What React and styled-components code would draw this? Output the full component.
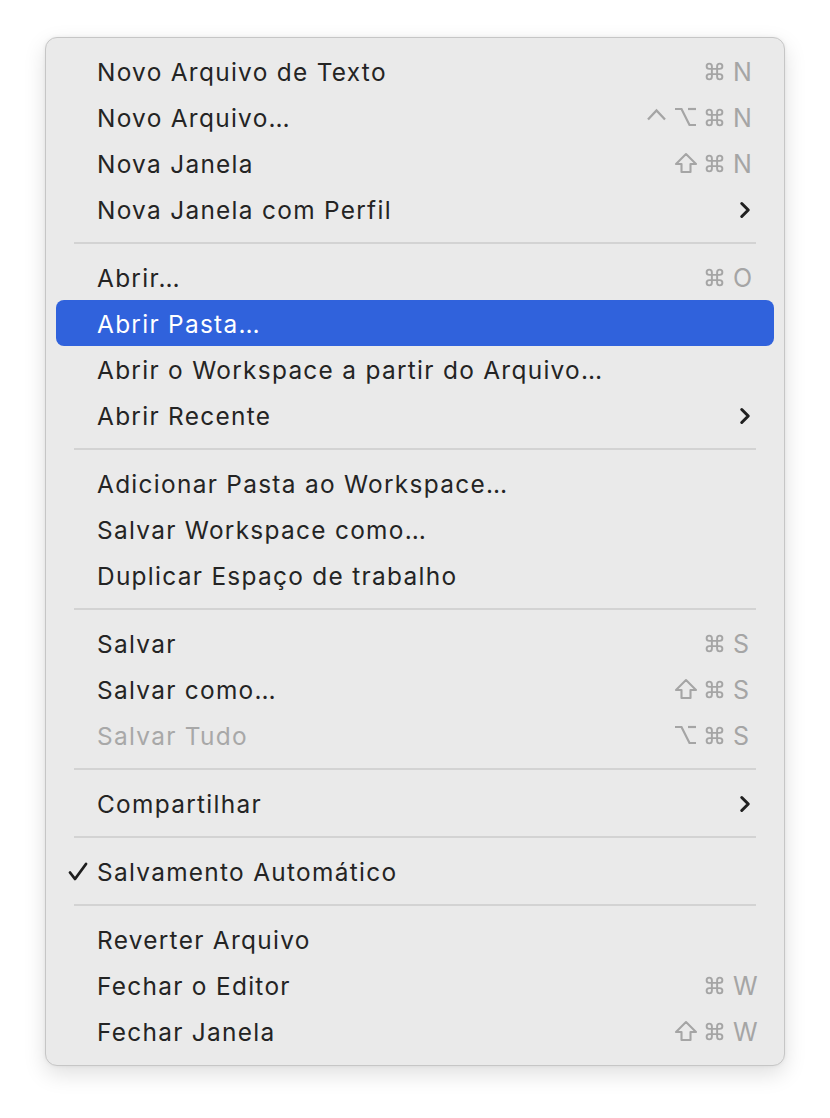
import React from "react";
import styled, { createGlobalStyle } from "styled-components";
import { ChevronRight } from "lucide-react";

const GlobalStyle = createGlobalStyle`
  html, body {
    margin: 0;
    padding: 0;
    background: #ffffff;
  }
  body {
    font-family: Inter, "Noto Sans", "Liberation Sans", sans-serif;
    -webkit-font-smoothing: antialiased;
  }
`;

const Page = styled.div`
  width: 830px;
  height: 1118px;
  padding: 37px 0 0 45px;
  box-sizing: border-box;
`;

const Menu = styled.div`
  width: 740px;
  box-sizing: border-box;
  padding: 10px 10px 11px;
  background: #eaeaea;
  border: 1px solid #c6c6c6;
  border-radius: 12px;
  box-shadow: 0 8px 22px rgba(0, 0, 0, 0.13), 0 0 4px rgba(0, 0, 0, 0.06);
`;

const Row = styled.div`
  height: 46px;
  display: flex;
  align-items: center;
  padding: 0 14px 0 0;
  border-radius: 8px;
  background: ${(p) => (p.$active ? "#3062dc" : "transparent")};
  color: ${(p) =>
    p.$active ? "#ffffff" : p.$disabled ? "#a8a8a8" : "#242424"};
`;

const CheckCell = styled.div`
  width: 41px;
  display: flex;
  justify-content: flex-end;
  padding-right: 9px;
  box-sizing: border-box;
`;

const Label = styled.span`
  flex: 1;
  font-size: 24.4px;
  letter-spacing: 1.3px;
  line-height: 1;
  padding-top: 3px;
`;

const Shortcut = styled.div`
  display: flex;
  align-items: center;
  color: ${(p) => (p.$active ? "#ffffff" : "#a5a5a5")};
`;

const Mod = styled.span`
  width: 29px;
  display: flex;
  justify-content: center;
  align-items: center;
`;

const Key = styled.span`
  width: 27px;
  margin-left: 4px;
  font-size: 25px;
  line-height: 1;
  padding-top: 2px;
`;

const Arrow = styled.div`
  display: flex;
  align-items: center;
  margin-right: 2px;
  padding-top: 2px;
  color: #202020;
`;

const Separator = styled.div`
  height: 2px;
  margin: 10px 18px 10px 18px;
  background: #d3d3d3;
`;

const Cmd = () => (
  <svg width="21" height="21" viewBox="0 0 24 24" fill="none" stroke="currentColor" strokeWidth="2.2">
    <path d="M15 6v12a3 3 0 1 0 3-3H6a3 3 0 1 0 3 3V6a3 3 0 1 0-3 3h12a3 3 0 1 0-3-3" />
  </svg>
);

const Opt = () => (
  <svg width="23" height="20" viewBox="0 0 23 20" fill="none" stroke="currentColor" strokeWidth="2.2">
    <path d="M1 2h6.5l8 16h6.5" />
    <path d="M14 2h8" />
  </svg>
);

const Ctrl = () => (
  <svg width="21" height="20" viewBox="0 0 21 20" fill="none" stroke="currentColor" strokeWidth="2.3">
    <path d="M2 12.5 10.5 3.5 19 12.5" />
  </svg>
);

const Shift = () => (
  <svg width="24" height="22" viewBox="0 0 24 22" fill="none" stroke="currentColor" strokeWidth="2.1" strokeLinejoin="round">
    <path d="M12 2 2 12h5.5v8h9v-8H22Z" />
  </svg>
);

const Check = () => (
  <svg width="20" height="19" viewBox="0 0 20 19" fill="none" stroke="#1e1e1e" strokeWidth="2.8" strokeLinecap="round" strokeLinejoin="round">
    <path d="M2 10.5 7 17 18 2" />
  </svg>
);

const mods = { ctrl: Ctrl, opt: Opt, shift: Shift, cmd: Cmd };

const groups = [
  [
    { label: "Novo Arquivo de Texto", keys: ["cmd"], k: "N" },
    { label: "Novo Arquivo...", keys: ["ctrl", "opt", "cmd"], k: "N" },
    { label: "Nova Janela", keys: ["shift", "cmd"], k: "N" },
    { label: "Nova Janela com Perfil", sub: true },
  ],
  [
    { label: "Abrir...", keys: ["cmd"], k: "O" },
    { label: "Abrir Pasta...", active: true },
    { label: "Abrir o Workspace a partir do Arquivo..." },
    { label: "Abrir Recente", sub: true },
  ],
  [
    { label: "Adicionar Pasta ao Workspace..." },
    { label: "Salvar Workspace como..." },
    { label: "Duplicar Espaço de trabalho" },
  ],
  [
    { label: "Salvar", keys: ["cmd"], k: "S" },
    { label: "Salvar como...", keys: ["shift", "cmd"], k: "S" },
    { label: "Salvar Tudo", keys: ["opt", "cmd"], k: "S", disabled: true },
  ],
  [{ label: "Compartilhar", sub: true }],
  [{ label: "Salvamento Automático", checked: true }],
  [
    { label: "Reverter Arquivo" },
    { label: "Fechar o Editor", keys: ["cmd"], k: "W" },
    { label: "Fechar Janela", keys: ["shift", "cmd"], k: "W" },
  ],
];

const MenuItem = ({ item }) => (
  <Row $active={item.active} $disabled={item.disabled}>
    <CheckCell>{item.checked && <Check />}</CheckCell>
    <Label>{item.label.replace("...", "…")}</Label>
    {item.keys && (
      <Shortcut $active={item.active}>
        {item.keys.map((m) => {
          const Icon = mods[m];
          return (
            <Mod key={m}>
              <Icon />
            </Mod>
          );
        })}
        <Key>{item.k}</Key>
      </Shortcut>
    )}
    {item.sub && (
      <Arrow>
        <ChevronRight size={26} strokeWidth={2.8} />
      </Arrow>
    )}
  </Row>
);

export default function App() {
  return (
    <Page>
      <GlobalStyle />
      <Menu>
        {groups.map((group, gi) => (
          <React.Fragment key={gi}>
            {gi > 0 && <Separator />}
            {group.map((item) => (
              <MenuItem key={item.label} item={item} />
            ))}
          </React.Fragment>
        ))}
      </Menu>
    </Page>
  );
}
